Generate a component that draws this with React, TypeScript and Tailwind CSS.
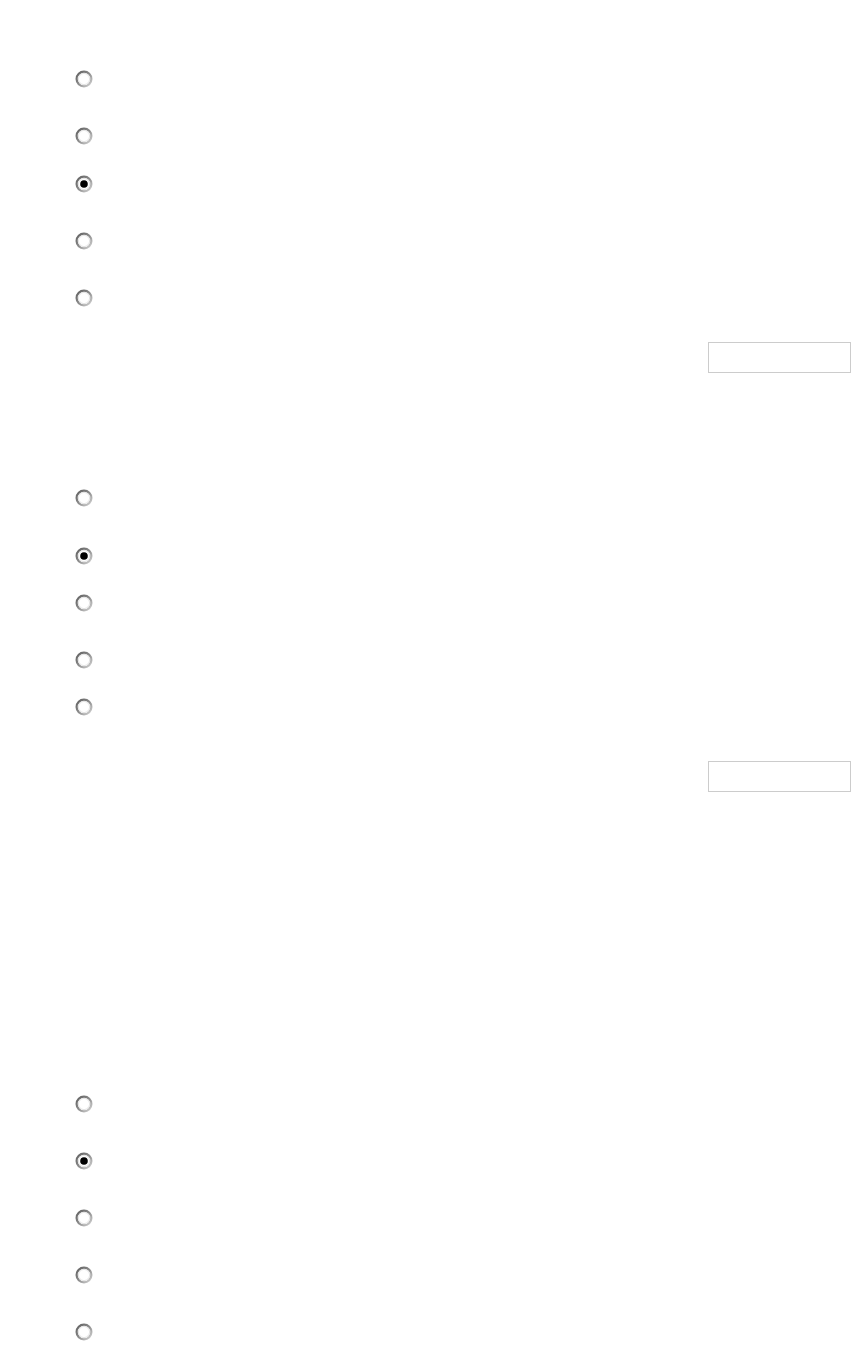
const Radio = ({ checked = false }: { checked?: boolean }) => (
  <svg width="18" height="18" viewBox="0 0 18 18" className="block -mt-px -ml-px shrink-0">
    <defs>
      <linearGradient id="ring" x1="0" y1="0" x2="1" y2="1">
        <stop offset="0%" stopColor="#5e5e5e" />
        <stop offset="50%" stopColor="#8c8c8c" />
        <stop offset="100%" stopColor="#d6d6d6" />
      </linearGradient>
    </defs>
    <circle cx="9" cy="9" r="7.4" fill="#fff" stroke="url(#ring)" strokeWidth="2.2" />
    <circle cx="9" cy="9" r="5.6" fill="none" stroke="#e4e4e4" strokeWidth="1" />
    {checked && <circle cx="9" cy="9" r="3.8" fill="#000" />}
  </svg>
)

// gaps between radio tops, measured off the page
const groups = [
  { gaps: ['h-[57px]', 'h-[48px]', 'h-[57px]', 'h-[57px]', 'h-[52px]'], checked: 2, box: true },
  { gaps: ['h-[58px]', 'h-[47px]', 'h-[57px]', 'h-[47px]', 'h-[62px]'], checked: 1, box: true },
  { gaps: ['h-[57px]', 'h-[57px]', 'h-[57px]', 'h-[57px]', 'h-[25px]'], checked: 1, box: false },
]

export default function App() {
  return (
    <div className="min-h-[1349px] w-[851px] bg-white font-['Liberation_Sans',sans-serif] overflow-hidden">
      <div className="pt-[71px]">
        {groups.map((g, gi) => (
          <div key={gi} className={gi === 0 ? '' : gi === 1 ? 'pt-[117px]' : 'pt-[304px]'}>
            {g.gaps.map((h, i) => (
              <div key={i} className={`${h} flex items-start pl-[76px]`}>
                <Radio checked={i === g.checked} />
              </div>
            ))}
            {g.box && (
              <div className="flex justify-end">
                <div className="w-[143px] h-[31px] border border-[#cccccc] bg-white" />
              </div>
            )}
          </div>
        ))}
      </div>
    </div>
  )
}
